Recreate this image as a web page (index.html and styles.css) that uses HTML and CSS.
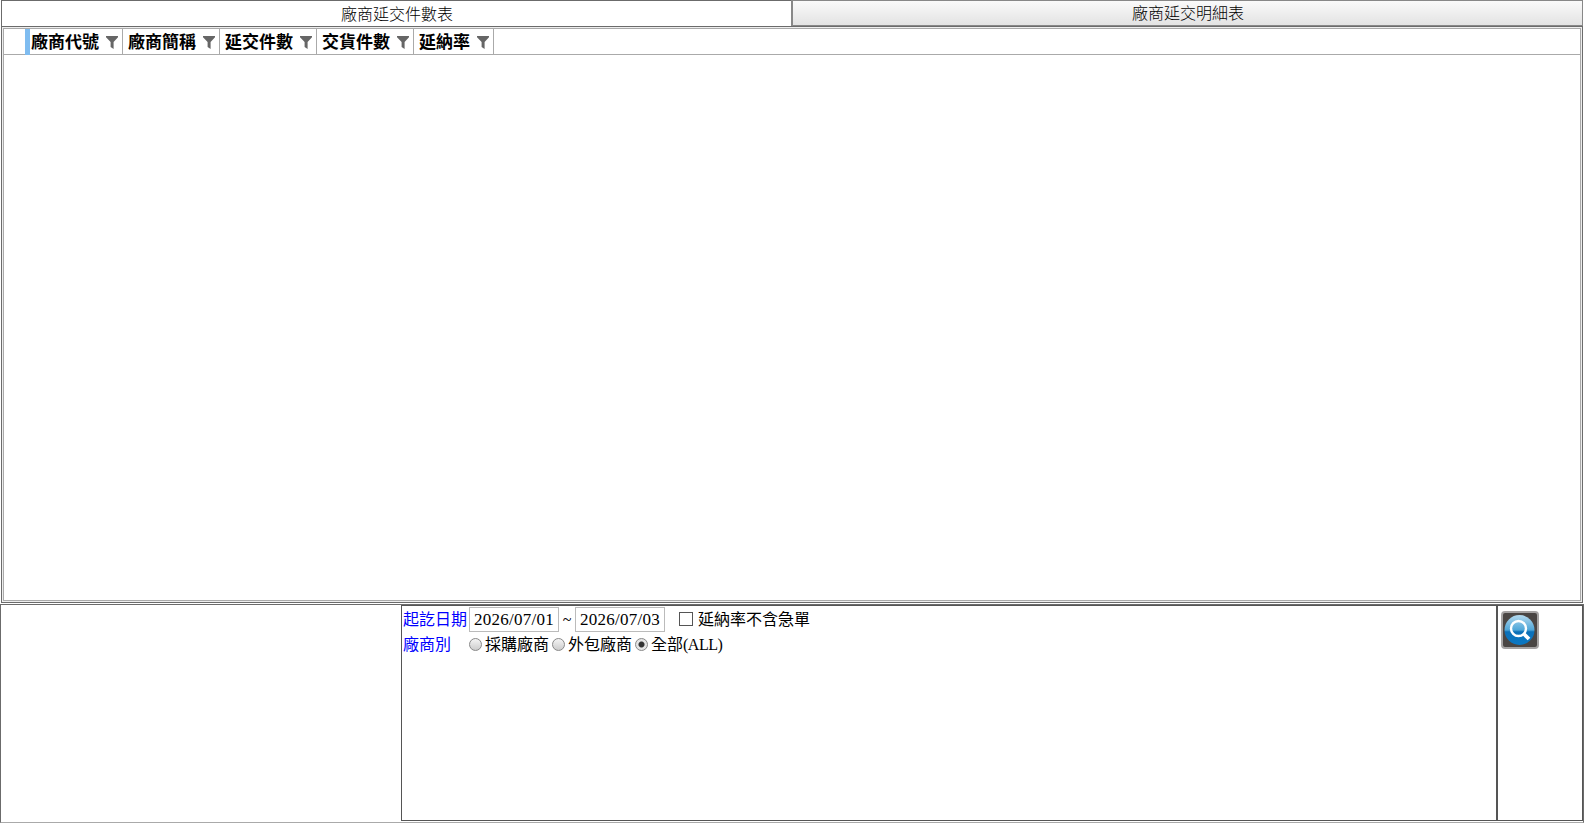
FILE: index.html
```html
<!DOCTYPE html>
<html lang="zh-Hant">
<head>
  <meta charset="UTF-8">
  <meta name="viewport" content="width=device-width, initial-scale=1.0">
  <title>廠商延交件數表</title>
  <link rel="stylesheet" href="styles.css">
</head>
<body>
  <svg width="0" height="0" class="defs">
    <symbol id="funnel" viewBox="0 0 12 13">
      <path d="M0 0h12v1.2L7.6 6v7L4.6 11V6L0 1.2z" fill="#666"/>
    </symbol>
  </svg>

  <div class="report">
    <div class="tabs">
      <div class="tab active">廠商延交件數表</div>
      <div class="tab">廠商延交明細表</div>
    </div>
    <div class="panel">
      <div class="grid">
        <div class="grid-header">
          <div class="row-head"></div>
          <div class="marker"></div>
          <div class="col"><span>廠商代號</span><svg><use href="#funnel"/></svg></div>
          <div class="col"><span>廠商簡稱</span><svg><use href="#funnel"/></svg></div>
          <div class="col"><span>延交件數</span><svg><use href="#funnel"/></svg></div>
          <div class="col"><span>交貨件數</span><svg><use href="#funnel"/></svg></div>
          <div class="col"><span>延納率</span><svg><use href="#funnel"/></svg></div>
        </div>
      </div>
    </div>
  </div>

  <div class="bottom">
    <div class="filters">
      <div class="line">
        <span class="label">起訖日期</span>
        <input class="date" type="text" value="2026/07/01">
        <span class="tilde">~</span>
        <input class="date" type="text" value="2026/07/03">
        <input class="check" type="checkbox" id="urgent">
        <label class="text" for="urgent">延納率不含急單</label>
      </div>
      <div class="line">
        <span class="label">廠商別</span>
        <label class="option"><input type="radio" name="vendor"><span class="text">採購廠商</span></label>
        <label class="option"><input type="radio" name="vendor"><span class="text">外包廠商</span></label>
        <label class="option"><input type="radio" name="vendor" checked><span class="text">全部</span><span class="latin">(ALL)</span></label>
      </div>
    </div>
    <div class="actions">
      <button class="search" type="button" title="查詢">
        <svg width="38" height="38" viewBox="0 0 38 38">
          <defs>
            <linearGradient id="ball" x1="0" y1="0" x2="0" y2="1">
              <stop offset="0" stop-color="#b4daef"/>
              <stop offset=".5" stop-color="#4fa6d8"/>
              <stop offset=".56" stop-color="#0c70b8"/>
              <stop offset="1" stop-color="#0a78c4"/>
            </linearGradient>
          </defs>
          <rect x="1" y="1" width="36" height="36" rx="3" fill="#4a4644" stroke="#a5a3a3" stroke-width="2"/>
          <circle cx="18.5" cy="19" r="15" fill="url(#ball)"/>
          <circle cx="17.5" cy="17.5" r="7.5" fill="none" stroke="#fff" stroke-width="2.4"/>
          <path d="M22.5 22.5l5.5 5.5" stroke="#fff" stroke-width="3.8"/>
        </svg>
      </button>
    </div>
  </div>
</body>
</html>
```

FILE: styles.css
```css
* {
  margin: 0;
  padding: 0;
  box-sizing: border-box;
}

body {
  display: flex;
  flex-direction: column;
  height: 823px;
  overflow: hidden;
  background-color: #fff;
  color: #000;
  font-family: "Liberation Serif", "Noto Sans CJK TC", serif;
  font-size: 16px;
}

.defs {
  position: absolute;
}

.report {
  display: flex;
  flex-direction: column;
  height: 603px;
  margin: 0 1px;
  flex: none;
}

/* 頁籤 */
.tabs {
  display: flex;
  height: 26px;
  flex: none;
}

.tab {
  flex: 1;
  padding-left: 1px;
  border: 1px solid #888;
  border-width: 1px 1px 1px 2px;
  background: linear-gradient(#fafafa, #e3e3e3);
  font-weight: 300;
  line-height: 25px;
  text-align: center;
}

.tab.active {
  border-color: #6b6b6b;
  border-width: 1px 0 0 1px;
  background: #fff;
  line-height: 27px;
}

.panel {
  flex: 1;
  border: 1px solid #6b6b6b;
  padding: 1px;
  background: #eee;
}

.grid {
  height: 100%;
  border: 1px solid #aaa;
  background: #fff;
}

.grid-header {
  display: flex;
  height: 26px;
  border-bottom: 1px solid #aaa;
}

.row-head {
  width: 21px;
}

.marker {
  width: 5px;
  height: 26px;
  background: #7fbcf0;
}

.col {
  display: flex;
  align-items: center;
  justify-content: space-between;
  padding: 0 4px 0 1px;
  width: 93px;
  border-right: 1px solid #aaa;
  font-size: 17px;
  font-weight: bold;
  line-height: 25px;
}

.col + .col {
  width: 97px;
  padding-left: 5px;
}

.col:last-child {
  width: 80px;
}

.col span {
  padding-top: 2px;
}

.col svg {
  width: 12px;
  height: 13px;
  margin-top: 1px;
}

/* 查詢條件 */
.bottom {
  display: flex;
  flex: none;
  height: 219px;
  margin-top: 1px;
  padding: 0 0 1px 400px;
  border: 1px solid #6b6b6b;
  border-bottom-color: #aaa;
}

.filters {
  flex: 1;
  padding: 1px 0 0 1px;
  border: 1px solid #555;
}

.line {
  display: flex;
  align-items: center;
  height: 25px;
}

.label {
  width: 66px;
  padding-bottom: 3px;
  color: #00f;
}

.text {
  padding-bottom: 3px;
}

.date {
  width: 90px;
  height: 25px;
  padding: 0 4px;
  border: 1px solid #bbb;
  font-family: "Liberation Serif", serif;
  font-size: 17px;
  letter-spacing: 0.25px;
}

.tilde {
  width: 16px;
  text-align: center;
}

.check {
  appearance: none;
  width: 14px;
  height: 14px;
  margin: 0 5px 2px 14px;
  border: 1px solid #555;
}

.option {
  display: flex;
  align-items: center;
  width: 83px;
  white-space: nowrap;
}

.option input {
  appearance: none;
  flex: none;
  width: 13px;
  height: 13px;
  margin-right: 3px;
  border: 1px solid #888;
  border-radius: 50%;
  background: linear-gradient(#f4f4f4, #ccc);
}

.option input:checked {
  background: radial-gradient(circle, #333 2.5px, #e4e4e4 3.5px);
}

.latin {
  letter-spacing: -0.5px;
}

.actions {
  width: 86px;
  padding: 5px 0 0 3px;
  border: 1px solid #555;
}

.search {
  display: block;
  width: 38px;
  height: 38px;
  border: none;
  background: none;
  cursor: pointer;
}
```
